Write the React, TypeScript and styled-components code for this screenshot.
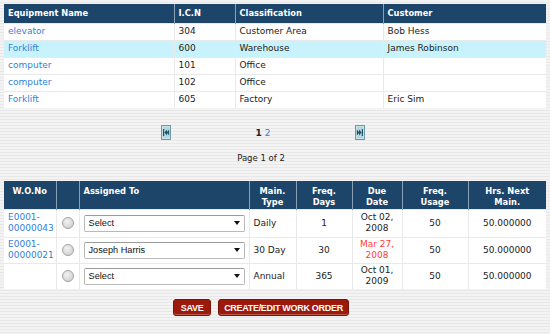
import styled, { createGlobalStyle } from "styled-components";

const GlobalStyle = createGlobalStyle`
  html, body {
    margin: 0;
    padding: 0;
  }
  body {
    background: repeating-linear-gradient(
      to bottom,
      #f3f3f3 0px,
      #f3f3f3 2px,
      #e8e8e8 2px,
      #e8e8e8 3px
    );
    font-family: "DejaVu Sans", Verdana, sans-serif;
    font-size: 9px;
    color: #222;
  }
`;

const Page = styled.div`
  width: 550px;
  height: 334px;
  padding: 4px 4px 0 4px;
  box-sizing: border-box;
  display: flex;
  flex-direction: column;
`;

const Grid = styled.table`
  width: 542px;
  border-collapse: collapse;
  table-layout: fixed;
  background: #fff;
`;

const HeadCell = styled.th<{ $align?: string }>`
  background: #1d4469;
  color: #fff;
  font-weight: bold;
  font-size: 8.3px;
  text-align: ${(p) => p.$align || "left"};
  vertical-align: top;
  padding: 5px 4px 0 4px;
  border-left: 1px solid #8aa0b5;
  line-height: 11px;
  &:first-child {
    border-left: none;
  }
`;

const TopHeadRow = styled.tr`
  height: 19px;
  ${HeadCell} {
    vertical-align: middle;
    padding-top: 0;
  }
`;

const WoHeadRow = styled.tr`
  height: 28px;
`;

const Row = styled.tr<{ $active?: boolean; $h: number }>`
  height: ${(p) => p.$h}px;
  background: ${(p) => (p.$active ? "#c9f3fc" : "#fff")};
`;

const Cell = styled.td<{ $align?: string; $color?: string }>`
  padding: 0 4px;
  border-top: 1px solid #e9e9e9;
  border-left: 1px solid #e9e9e9;
  text-align: ${(p) => p.$align || "left"};
  color: ${(p) => p.$color || "#222"};
  line-height: 11px;
  white-space: nowrap;
  overflow: hidden;
  &:first-child {
    border-left: none;
  }
`;

const Link = styled.a`
  color: #2f7fdc;
  text-decoration: none;
  cursor: pointer;
`;

const PagerRow = styled.div`
  display: flex;
  justify-content: center;
  align-items: center;
  padding-right: 24px;
  margin-top: 17px;
  height: 15px;
`;

const Numbers = styled.div`
  width: 184px;
  text-align: center;
  b {
    font-weight: bold;
    color: #222;
  }
`;

const PageInfo = styled.div`
  text-align: center;
  padding-right: 28px;
  margin-top: 13px;
  height: 11px;
  font-size: 8.5px;
`;

const WoTable = styled(Grid)`
  margin-top: 17px;
`;

const Radio = styled.span`
  display: inline-block;
  width: 10px;
  height: 10px;
  border-radius: 50%;
  border: 1px solid #a4a4a4;
  background: radial-gradient(circle at 40% 35%, #f2f2f2, #c9c9c9);
  vertical-align: middle;
`;

const SelectBox = styled.div`
  display: flex;
  align-items: center;
  justify-content: space-between;
  height: 15px;
  border: 1px solid #b9b9b9;
  border-top-color: #9c9c9c;
  border-radius: 2px;
  background: #fff;
  padding: 0 4px 0 4px;
  font-family: "Liberation Sans", Arial, sans-serif;
  font-size: 9.2px;
  color: #111;
`;

const Caret = styled.span`
  width: 0;
  height: 0;
  border-left: 3.5px solid transparent;
  border-right: 3.5px solid transparent;
  border-top: 4px solid #111;
`;

const Actions = styled.div`
  display: flex;
  justify-content: center;
  gap: 7px;
  padding-right: 28px;
  margin-top: 10px;
`;

const ActionButton = styled.button`
  height: 17px;
  min-width: 38px;
  padding: 0 5px;
  background: #9b1a0b;
  color: #fff;
  border: 1px solid #7a1207;
  border-radius: 3px;
  box-shadow: inset 0 -1px 0 #c25a4c;
  font-family: "Liberation Sans", Arial, sans-serif;
  font-weight: bold;
  font-size: 9px;
  letter-spacing: -0.3px;
  cursor: pointer;
`;

const PagerIcon = ({ dir }: { dir: "first" | "last" }) => (
  <svg width="10" height="15" viewBox="0 0 10 15">
    <rect x="0.5" y="0.5" width="9" height="14" fill="#d7eaf0" stroke="#6d9aa8" />
    <rect x="1.5" y="1.5" width="7" height="12" fill="#b7d6e0" />
    {dir === "first" ? (
      <g fill="#1f5566">
        <rect x="2" y="4" width="1.2" height="7" />
        <polygon points="3.4,7.5 6,4.5 6,10.5" />
        <polygon points="5.6,7.5 8.2,4.5 8.2,10.5" />
      </g>
    ) : (
      <g fill="#1f5566">
        <polygon points="1.8,4.5 4.4,7.5 1.8,10.5" />
        <polygon points="4,4.5 6.6,7.5 4,10.5" />
        <rect x="6.8" y="4" width="1.2" height="7" />
      </g>
    )}
  </svg>
);

const equipment = [
  { name: "elevator", icn: "304", cls: "Customer Area", cust: "Bob Hess" },
  { name: "Forklift", icn: "600", cls: "Warehouse", cust: "James Robinson", active: true },
  { name: "computer", icn: "101", cls: "Office", cust: "" },
  { name: "computer", icn: "102", cls: "Office", cust: "" },
  { name: "Forklift", icn: "605", cls: "Factory", cust: "Eric Sim" },
];

const orders = [
  { wo: ["E0001-", "00000043"], who: "Select", type: "Daily", days: "1", due: ["Oct 02,", "2008"], late: false, h: 28 },
  { wo: ["E0001-", "00000021"], who: "Joseph Harris", type: "30 Day", days: "30", due: ["Mar 27,", "2008"], late: true, h: 26 },
  { wo: null, who: "Select", type: "Annual", days: "365", due: ["Oct 01,", "2009"], late: false, h: 26 },
];

export default function App() {
  return (
    <>
      <GlobalStyle />
      <Page>
        <Grid>
          <colgroup>
            <col style={{ width: 170 }} />
            <col style={{ width: 61 }} />
            <col style={{ width: 148 }} />
            <col style={{ width: 163 }} />
          </colgroup>
          <thead>
            <TopHeadRow>
              <HeadCell>Equipment Name</HeadCell>
              <HeadCell>I.C.N</HeadCell>
              <HeadCell>Classification</HeadCell>
              <HeadCell>Customer</HeadCell>
            </TopHeadRow>
          </thead>
          <tbody>
            {equipment.map((e, i) => (
              <Row key={i} $h={17} $active={e.active}>
                <Cell>
                  <Link>{e.name}</Link>
                </Cell>
                <Cell>{e.icn}</Cell>
                <Cell>{e.cls}</Cell>
                <Cell>{e.cust}</Cell>
              </Row>
            ))}
          </tbody>
        </Grid>

        <PagerRow>
          <PagerIcon dir="first" />
          <Numbers>
            <b>1</b> <Link>2</Link>
          </Numbers>
          <PagerIcon dir="last" />
        </PagerRow>
        <PageInfo>Page 1 of 2</PageInfo>

        <WoTable>
          <colgroup>
            <col style={{ width: 52 }} />
            <col style={{ width: 23 }} />
            <col style={{ width: 170 }} />
            <col style={{ width: 47 }} />
            <col style={{ width: 56 }} />
            <col style={{ width: 50 }} />
            <col style={{ width: 66 }} />
            <col style={{ width: 78 }} />
          </colgroup>
          <thead>
            <WoHeadRow>
              <HeadCell $align="center">W.O.No</HeadCell>
              <HeadCell />
              <HeadCell>Assigned To</HeadCell>
              <HeadCell $align="center">
                Main.
                <br />
                Type
              </HeadCell>
              <HeadCell $align="center">
                Freq.
                <br />
                Days
              </HeadCell>
              <HeadCell $align="center">
                Due
                <br />
                Date
              </HeadCell>
              <HeadCell $align="center">
                Freq.
                <br />
                Usage
              </HeadCell>
              <HeadCell $align="center">
                Hrs. Next
                <br />
                Main.
              </HeadCell>
            </WoHeadRow>
          </thead>
          <tbody>
            {orders.map((o, i) => (
              <Row key={i} $h={o.h}>
                <Cell>
                  {o.wo && (
                    <Link>
                      {o.wo[0]}
                      <br />
                      {o.wo[1]}
                    </Link>
                  )}
                </Cell>
                <Cell $align="center">
                  <Radio />
                </Cell>
                <Cell>
                  <SelectBox>
                    <span>{o.who}</span>
                    <Caret />
                  </SelectBox>
                </Cell>
                <Cell>{o.type}</Cell>
                <Cell $align="center">{o.days}</Cell>
                <Cell $align="center" $color={o.late ? "#ff3b3b" : undefined}>
                  {o.due[0]}
                  <br />
                  {o.due[1]}
                </Cell>
                <Cell $align="center">50</Cell>
                <Cell $align="center">50.000000</Cell>
              </Row>
            ))}
          </tbody>
        </WoTable>

        <Actions>
          <ActionButton>SAVE</ActionButton>
          <ActionButton>CREATE/EDIT WORK ORDER</ActionButton>
        </Actions>
      </Page>
    </>
  );
}
